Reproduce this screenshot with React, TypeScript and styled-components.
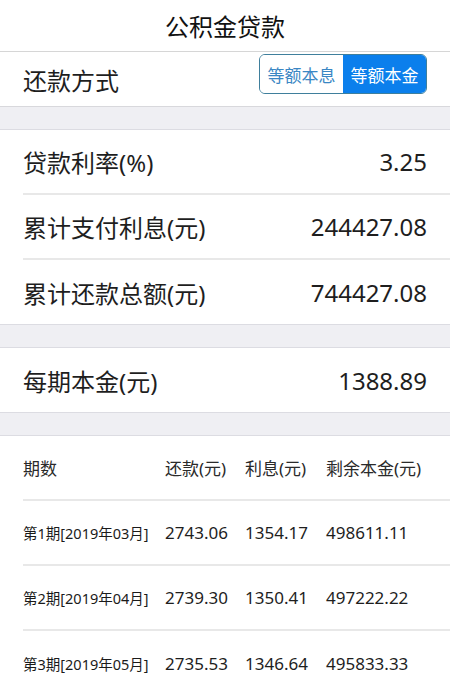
import React from 'react';
import styled, { createGlobalStyle } from 'styled-components';

const GlobalStyle = createGlobalStyle`
  body {
    margin: 0;
    background: #ffffff;
    font-family: "Noto Sans", "Noto Sans CJK SC", sans-serif;
    color: #1f1f1f;
  }
`;

const summary = [
  { label: '贷款利率(%)', value: '3.25' },
  { label: '累计支付利息(元)', value: '244427.08' },
  { label: '累计还款总额(元)', value: '744427.08' },
];

const schedule = [
  { period: '第1期[2019年03月]', pay: '2743.06', interest: '1354.17', left: '498611.11' },
  { period: '第2期[2019年04月]', pay: '2739.30', interest: '1350.41', left: '497222.22' },
  { period: '第3期[2019年05月]', pay: '2735.53', interest: '1346.64', left: '495833.33' },
];

export default function App() {
  return (
    <>
      <GlobalStyle />
      <Page>
        <Header>公积金贷款</Header>
        <MethodRow>
          <BigLabel>还款方式</BigLabel>
          <Segment>
            <SegButton>等额本息</SegButton>
            <SegButton active>等额本金</SegButton>
          </Segment>
        </MethodRow>
        <Gap />
        <Group>
          {summary.map((s) => (
            <InfoRow key={s.label}>
              <BigLabel>{s.label}</BigLabel>
              <BigValue>{s.value}</BigValue>
            </InfoRow>
          ))}
        </Group>
        <Gap />
        <Group>
          <InfoRow>
            <BigLabel>每期本金(元)</BigLabel>
            <BigValue>1388.89</BigValue>
          </InfoRow>
        </Group>
        <Gap />
        <Group>
          <TableRow>
            <HeadCell>期数</HeadCell>
            <HeadCell>还款(元)</HeadCell>
            <HeadCell>利息(元)</HeadCell>
            <HeadCell>剩余本金(元)</HeadCell>
          </TableRow>
          {schedule.map((r) => (
            <TableRow key={r.period}>
              <PeriodCell>{r.period}</PeriodCell>
              <NumCell>{r.pay}</NumCell>
              <NumCell>{r.interest}</NumCell>
              <NumCell>{r.left}</NumCell>
            </TableRow>
          ))}
        </Group>
      </Page>
    </>
  );
}

const Page = styled.div`
  width: 450px;
  height: 691px;
  overflow: hidden;
  background: #fff;
`;

const Header = styled.div`
  height: 52px;
  display: flex;
  align-items: center;
  justify-content: center;
  font-size: 24px;
  color: #111;
  border-bottom: 1px solid #d6d6d6;
  box-sizing: border-box;
`;

const MethodRow = styled.div`
  height: 55px;
  display: flex;
  align-items: center;
  justify-content: space-between;
  padding: 0 23px;
  border-bottom: 1px solid #d8d8dc;
  box-sizing: border-box;
`;

const Segment = styled.div`
  display: flex;
  height: 40px;
  margin-top: -10px;
  border: 1.5px solid #3f7f9c;
  border-radius: 6px;
  overflow: hidden;
  box-sizing: border-box;
`;

const SegButton = styled.div<{ active?: boolean }>`
  width: 83px;
  display: flex;
  align-items: center;
  justify-content: center;
  font-size: 17px;
  color: ${(p) => (p.active ? '#fff' : '#3a87c4')};
  background: ${(p) => (p.active ? '#0b7fec' : '#fff')};
`;

const Gap = styled.div`
  height: 23px;
  background: #efeff3;
  border-bottom: 1px solid #dcdce2;
  box-sizing: border-box;
`;

const Group = styled.div`
  background: #fff;
`;

const InfoRow = styled.div`
  height: 65px;
  margin-left: 23px;
  padding-right: 23px;
  display: flex;
  align-items: center;
  justify-content: space-between;
  border-bottom: 2px solid #e8e8e8;
  box-sizing: border-box;
  &:last-child {
    margin-left: 0;
    padding-left: 23px;
    border-bottom: 1px solid #dcdce2;
  }
`;

const BigLabel = styled.div`
  font-size: 24px;
  color: #1e1e1e;
`;

const BigValue = styled.div`
  font-size: 24px;
  color: #1e1e1e;
`;

const TableRow = styled.div`
  height: 65px;
  margin-left: 23px;
  display: grid;
  grid-template-columns: 142px 80px 81px 1fr;
  align-items: center;
  border-bottom: 2px solid #e8e8e8;
  box-sizing: border-box;
  &:last-child {
    border-bottom: none;
  }
`;

const HeadCell = styled.div`
  font-size: 17px;
  color: #2a2a2a;
`;

const PeriodCell = styled.div`
  font-size: 14.5px;
  color: #1a1a1a;
  white-space: nowrap;
`;

const NumCell = styled.div`
  font-size: 17px;
  color: #1e1e1e;
`;
